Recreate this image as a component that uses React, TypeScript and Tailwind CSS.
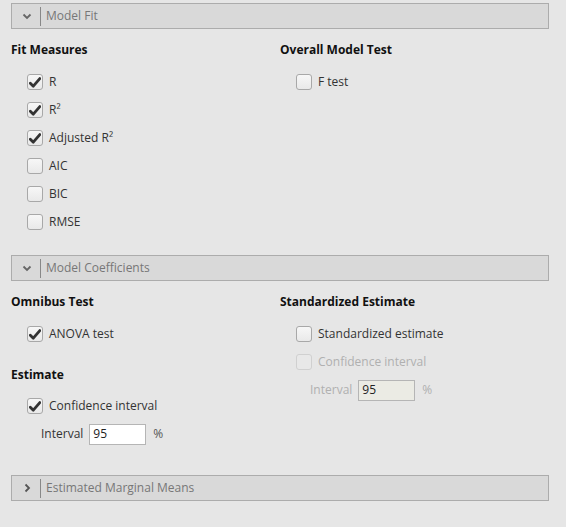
import React from "react";

const font = { fontFamily: '"Open Sans", "Noto Sans", sans-serif' };

function Check({ checked, disabled }: { checked?: boolean; disabled?: boolean }) {
  return (
    <div
      className={
        "w-[16px] h-[16px] rounded-[3px] border flex items-center justify-center shrink-0 " +
        (disabled
          ? "border-[#d0d0d0] bg-[#e8e8e8]"
          : "border-[#a8a8a8] bg-gradient-to-b from-[#f7f7f7] to-[#e9e9e9]")
      }
    >
      {checked && (
        <svg width="12" height="11" viewBox="0 0 12 11">
          <path d="M1.3 6.2 L4.3 9.2 L10.8 1.6" fill="none" stroke="#333" strokeWidth="2.8" strokeLinecap="round" strokeLinejoin="round" />
        </svg>
      )}
    </div>
  );
}

function Row({ label, checked, disabled }: { label: React.ReactNode; checked?: boolean; disabled?: boolean }) {
  return (
    <div className="h-[28px] flex items-center pl-[16px] gap-[6px]">
      <Check checked={checked} disabled={disabled} />
      <span className={"text-[12px] " + (disabled ? "text-[#b0b0b0]" : "text-[#333]")}>{label}</span>
    </div>
  );
}

function Heading({ children }: { children: React.ReactNode }) {
  return <div className="h-[20px] flex items-center text-[12px] font-bold text-[#111]">{children}</div>;
}

function Header({ title, open }: { title: string; open?: boolean }) {
  return (
    <div className="mx-[11px] w-[538px] h-[26px] border border-[#acacac] bg-[#d9d9d9] flex items-center">
      <div className="w-[28px] flex justify-center pl-[2px]">
        {open ? (
          <svg width="10" height="7" viewBox="0 0 10 7">
            <path d="M1.5 1.5 L5 5 L8.5 1.5" fill="none" stroke="#666" strokeWidth="1.8" />
          </svg>
        ) : (
          <svg width="7" height="10" viewBox="0 0 7 10">
            <path d="M1.5 1.5 L5 5 L1.5 8.5" fill="none" stroke="#555" strokeWidth="1.8" />
          </svg>
        )}
      </div>
      <div className="w-px h-[19px] bg-[#888]" />
      <span className="ml-[5px] text-[12px] text-[#777]">{title}</span>
    </div>
  );
}

function IntervalRow({ disabled, indent }: { disabled?: boolean; indent: string }) {
  return (
    <div className={"h-[28px] flex items-center " + indent}>
      <span className={"text-[12px] " + (disabled ? "text-[#b0b0b0]" : "text-[#333]")}>Interval</span>
      <div
        className={
          "ml-[6px] w-[57px] h-[21px] border flex items-center pl-[3px] text-[12px] text-[#222] " +
          (disabled ? "border-[#b5b5b5] bg-[#ebebe4]" : "border-[#b5b5b5] bg-white")
        }
      >
        95
      </div>
      <span className={"ml-[7px] text-[12px] " + (disabled ? "text-[#b0b0b0]" : "text-[#555]")}>%</span>
    </div>
  );
}

export default function App() {
  return (
    <div className="w-[566px] h-[527px] bg-[#e6e6e6] pt-[3px]" style={font}>
      <Header title="Model Fit" open />
      <div className="flex pl-[11px] pt-[11px]">
        <div className="w-[269px]">
          <Heading>Fit Measures</Heading>
          <div className="h-[8px]" />
          <Row label="R" checked />
          <Row label={<>R²</>} checked />
          <Row label={<>Adjusted R²</>} checked />
          <Row label="AIC" />
          <Row label="BIC" />
          <Row label="RMSE" />
        </div>
        <div>
          <Heading>Overall Model Test</Heading>
          <div className="h-[8px]" />
          <Row label="F test" />
        </div>
      </div>
      <div className="h-[19px]" />
      <Header title="Model Coefficients" open />
      <div className="flex pl-[11px] pt-[11px]">
        <div className="w-[269px]">
          <Heading>Omnibus Test</Heading>
          <div className="h-[8px]" />
          <Row label="ANOVA test" checked />
          <div className="h-[17px]" />
          <Heading>Estimate</Heading>
          <div className="h-[7px]" />
          <Row label="Confidence interval" checked />
          <IntervalRow indent="pl-[30px]" />
        </div>
        <div>
          <Heading>Standardized Estimate</Heading>
          <div className="h-[8px]" />
          <Row label="Standardized estimate" />
          <Row label="Confidence interval" disabled />
          <IntervalRow disabled indent="pl-[30px]" />
        </div>
      </div>
      <div className="h-[27px]" />
      <Header title="Estimated Marginal Means" />
    </div>
  );
}
